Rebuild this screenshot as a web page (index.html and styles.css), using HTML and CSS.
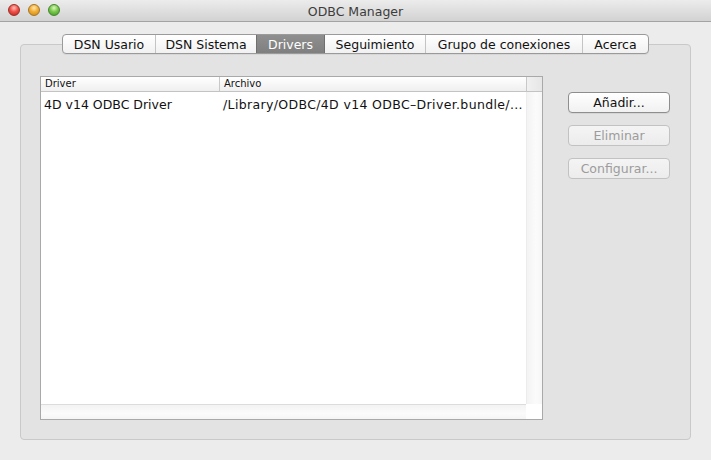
FILE: index.html
```html
<!DOCTYPE html>
<html>
<head>
<meta charset="utf-8">
<link rel="stylesheet" href="styles.css">
</head>
<body>
<div class="window">
  <div class="titlebar">
    <div class="lights">
      <span class="light red"></span>
      <span class="light yellow"></span>
      <span class="light green"></span>
    </div>
    <div class="title">ODBC Manager</div>
  </div>
  <div class="content">
    <div class="tabs">
      <div class="tab t1">DSN Usario</div>
      <div class="tab t2">DSN Sistema</div>
      <div class="tab t3 active">Drivers</div>
      <div class="tab t4">Seguimiento</div>
      <div class="tab t5">Grupo de conexiones</div>
      <div class="tab t6">Acerca</div>
    </div>
    <div class="panel">
      <div class="table">
        <div class="thead">
          <div class="th col1">Driver</div>
          <div class="th col2">Archivo</div>
          <div class="th corner"></div>
        </div>
        <div class="tbody">
          <div class="rows">
            <div class="row">
              <div class="td col1">4D v14 ODBC Driver</div>
              <div class="td col2 path">/Library/ODBC/4D v14 ODBC–Driver.bundle/...</div>
            </div>
          </div>
          <div class="vscroll"></div>
        </div>
        <div class="hscroll-row">
          <div class="hscroll"></div>
          <div class="scorner"></div>
        </div>
      </div>
      <div class="buttons">
        <button class="btn">Añadir...</button>
        <button class="btn disabled">Eliminar</button>
        <button class="btn disabled">Configurar...</button>
      </div>
    </div>
  </div>
</div>
</body>
</html>
```

FILE: styles.css
```css
* { box-sizing: border-box; }
html, body { margin: 0; padding: 0; }
body {
  width: 711px;
  height: 460px;
  background: #ececec;
  font-family: "DejaVu Sans", "Liberation Sans", sans-serif;
  overflow: hidden;
}
.window { width: 711px; height: 460px; display: flex; flex-direction: column; }
.titlebar {
  height: 22px;
  flex: none;
  position: relative;
  background: linear-gradient(#ececec, #d2d2d2);
  border-bottom: 1px solid #a3a3a3;
  display: flex;
  align-items: center;
  justify-content: center;
}
.lights {
  position: absolute;
  left: 8px;
  top: 4px;
  display: flex;
  gap: 8px;
}
.light {
  width: 12px;
  height: 12px;
  border-radius: 50%;
  display: block;
}
.red { background: radial-gradient(circle at 50% 30%, #ffc0b5 0, #f0504a 45%, #c01f1a 100%); border: 1px solid #9c2f28; }
.yellow { background: radial-gradient(circle at 50% 30%, #ffe9ad 0, #f3ae36 45%, #c78710 100%); border: 1px solid #a57526; }
.green { background: radial-gradient(circle at 50% 30%, #dcf7bd 0, #79c94c 45%, #3b981e 100%); border: 1px solid #47862e; }
.title {
  font-size: 12.5px;
  color: #3c3c3c;
  margin-top: 1px;
}
.content {
  flex: 1;
  display: flex;
  flex-direction: column;
  padding: 12px 20px 20px;
}
.tabs {
  align-self: flex-start;
  margin-left: 42px;
  height: 20px;
  display: flex;
  border: 1px solid #9a9a9a;
  border-radius: 4px;
  background: linear-gradient(#ffffff, #f1f1f1);
  position: relative;
  z-index: 2;
  margin-bottom: -10px;
  overflow: hidden;
  box-shadow: 0 1px 0 rgba(0,0,0,0.05);
}
.tab {
  font-size: 12.5px;
  color: #111;
  display: flex;
  align-items: center;
  justify-content: center;
  border-left: 1px solid #c4c4c4;
  height: 100%;
}
.tab:first-child { border-left: none; }
.t1 { width: 92px; }
.t2 { width: 101px; }
.t3 { width: 68px; }
.t4 { width: 101px; }
.t5 { width: 157px; }
.t6 { width: 66px; }
.tab.active {
  background: linear-gradient(#8f8f8f, #7f7f7f);
  color: #fff;
  border-left-color: #6f6f6f;
}
.tab.active + .tab { border-left-color: #6f6f6f; }
.panel {
  height: 396px;
  background: #e3e3e3;
  border: 1px solid #c9c9c9;
  border-radius: 4px;
  display: flex;
  padding: 31px 19px 0 19px;
  gap: 25px;
}
.table {
  width: 503px;
  height: 344px;
  border: 1px solid #a9a9a9;
  background: #fff;
  display: flex;
  flex-direction: column;
}
.thead {
  height: 15px;
  display: flex;
  flex: none;
  background: linear-gradient(#ffffff, #efefef);
  border-bottom: 1px solid #c3c3c3;
}
.th {
  font-size: 10px;
  color: #111;
  line-height: 14px;
  padding-left: 4px;
}
.col1 { width: 178px; }
.col2 { flex: 1; }
.th.col2 { border-left: 1px solid #c8c8c8; }
.th.corner {
  width: 16px;
  border-left: 1px solid #c8c8c8;
  padding: 0;
  background: linear-gradient(90deg, #f0f0f0, #e6e6e6);
}
.tbody {
  flex: 1;
  display: flex;
}
.rows { flex: 1; }
.row {
  display: flex;
  height: 20px;
  align-items: center;
  margin-top: 2px;
}
.td {
  font-size: 12.5px;
  color: #111;
  padding-left: 3px;
  white-space: nowrap;
}
.td.col2 { padding-left: 4px; }
.path { letter-spacing: 0.35px; }
.vscroll {
  width: 16px;
  border-left: 1px solid #ececec;
  background: linear-gradient(90deg, #f3f3f3, #fbfbfb 60%, #f6f6f6);
}
.hscroll-row {
  height: 15px;
  flex: none;
  display: flex;
}
.hscroll {
  flex: 1;
  border-top: 1px solid #dcdcdc;
  background: linear-gradient(#f3f3f3, #fbfbfb 60%, #f5f5f5);
}
.scorner { width: 16px; background: #fff; }
.buttons {
  display: flex;
  flex-direction: column;
  gap: 12px;
  padding-top: 16px;
}
.btn {
  width: 102px;
  height: 21px;
  font-family: "DejaVu Sans", "Liberation Sans", sans-serif;
  font-size: 12.5px;
  color: #111;
  border: 1px solid #8e8e8e;
  border-radius: 4px;
  background: linear-gradient(#ffffff, #f1f1f1);
  padding: 0;
  box-shadow: 0 1px 0 rgba(0,0,0,0.06);
}
.btn.disabled {
  color: #9c9c9c;
  border-color: #c2c2c2;
  background: linear-gradient(#f4f4f4, #ececec);
  box-shadow: none;
}
```
